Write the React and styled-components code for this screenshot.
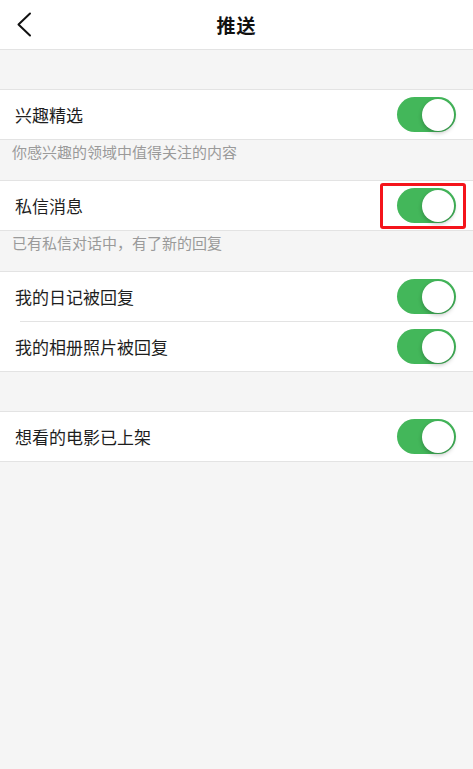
import React from "react";
import styled, { createGlobalStyle } from "styled-components";

const GlobalStyle = createGlobalStyle`
  html, body {
    margin: 0;
    padding: 0;
    background: #f5f5f5;
    font-family: "Noto Sans CJK SC", "Noto Sans", sans-serif;
  }
`;

const Page = styled.div`
  min-height: 769px;
  background: #f5f5f5;
  color: #222;
`;

const Header = styled.header`
  height: 49px;
  background: #fff;
  border-bottom: 1px solid #e3e3e3;
  display: grid;
  grid-template-columns: 60px 1fr 60px;
  align-items: center;
`;

const BackButton = styled.button`
  border: none;
  background: none;
  padding: 0 0 0 16px;
  height: 49px;
  display: flex;
  align-items: center;
  cursor: pointer;
`;

const Title = styled.h1`
  margin: 0;
  text-align: center;
  font-size: 19px;
  font-weight: 700;
  color: #111;
  letter-spacing: 1px;
`;

const Gap = styled.div`
  height: ${(p) => p.$h}px;
`;

const Group = styled.section`
  background: #fff;
  border-top: 1px solid #e3e3e3;
  border-bottom: 1px solid #e3e3e3;
`;

const Row = styled.div`
  height: 49px;
  display: flex;
  align-items: center;
  justify-content: space-between;
  padding: 0 17px 0 15px;
  position: relative;

  & + & {
    border-top: 1px solid #e3e3e3;
    margin-left: 20px;
    padding-left: 0;
  }
  & + & > span {
    margin-left: -5px;
  }
`;

const Label = styled.span`
  font-size: 17px;
  color: #1e1e1e;
`;

const Description = styled.p`
  margin: 0;
  height: 40px;
  box-sizing: border-box;
  padding: 2px 12px 0;
  line-height: 20px;
  font-size: 15px;
  color: #9a9a9a;
`;

const Track = styled.div`
  position: relative;
  width: 59px;
  height: 35px;
  border-radius: 18px;
  background: ${(p) => (p.$on ? "#43b75a" : "#e5e5e5")};
  flex-shrink: 0;

  &::before {
    content: "";
    position: absolute;
    top: 1.5px;
    left: ${(p) => (p.$on ? "25px" : "1.5px")};
    width: 32px;
    height: 32px;
    border-radius: 50%;
    background: #fff;
    box-shadow: 0 2px 4px rgba(0, 0, 0, 0.25);
  }

  ${(p) =>
    p.$highlight &&
    `
    &::after {
      content: "";
      position: absolute;
      top: -5px;
      bottom: -6px;
      left: -17px;
      right: -10px;
      border: 3px solid #f4141b;
      border-radius: 3px;
    }
  `}
`;

const Toggle = ({ on = true, highlight }) => (
  <Track $on={on} $highlight={highlight} />
);

const Chevron = () => (
  <svg width="16" height="26" viewBox="0 0 16 26">
    <path
      d="M14 1.5 L2.5 12.5 L14 23.5"
      fill="none"
      stroke="#111"
      strokeWidth="2"
      strokeLinecap="round"
      strokeLinejoin="round"
    />
  </svg>
);

const App = () => (
  <Page>
    <GlobalStyle />
    <Header>
      <BackButton>
        <Chevron />
      </BackButton>
      <Title>推送</Title>
      <div />
    </Header>

    <Gap $h={39} />
    <Group>
      <Row>
        <Label>兴趣精选</Label>
        <Toggle />
      </Row>
    </Group>
    <Description>你感兴趣的领域中值得关注的内容</Description>

    <Group>
      <Row>
        <Label>私信消息</Label>
        <Toggle highlight />
      </Row>
    </Group>
    <Description>已有私信对话中，有了新的回复</Description>

    <Group>
      <Row>
        <Label>我的日记被回复</Label>
        <Toggle />
      </Row>
      <Row>
        <Label>我的相册照片被回复</Label>
        <Toggle />
      </Row>
    </Group>

    <Gap $h={39} />
    <Group>
      <Row>
        <Label>想看的电影已上架</Label>
        <Toggle />
      </Row>
    </Group>
  </Page>
);

export default App;
